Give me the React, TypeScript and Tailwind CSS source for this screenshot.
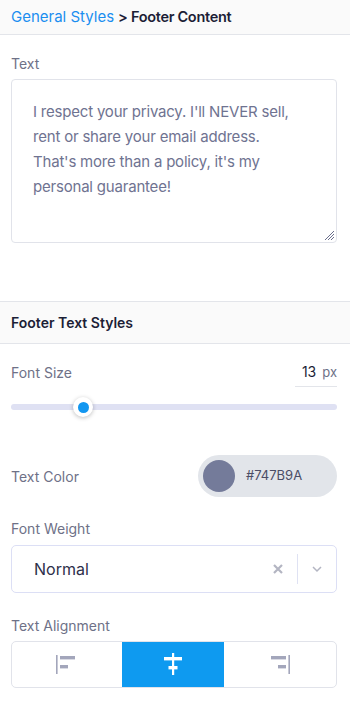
import React from "react";

function AlignLeft() {
  return (
    <svg width="24" height="24" viewBox="0 0 24 24">
      <rect x="1" y="2" width="1.6" height="19" fill="#a3a6bb" />
      <rect x="5" y="3" width="15" height="3.4" fill="#a3a6bb" />
      <rect x="5" y="12" width="8" height="3.4" fill="#a3a6bb" />
    </svg>
  );
}
function AlignCenter() {
  return (
    <svg width="24" height="24" viewBox="0 0 24 24">
      <rect x="11" y="0" width="2.2" height="22" fill="#fff" />
      <rect x="3" y="4" width="18" height="3.4" fill="#fff" />
      <rect x="7.5" y="13" width="9" height="3.4" fill="#fff" />
    </svg>
  );
}
function AlignRight() {
  return (
    <svg width="24" height="24" viewBox="0 0 24 24">
      <rect x="20.4" y="2" width="1.6" height="19" fill="#a3a6bb" />
      <rect x="3" y="3" width="15" height="3.4" fill="#a3a6bb" />
      <rect x="10" y="12" width="8" height="3.4" fill="#a3a6bb" />
    </svg>
  );
}

export default function App() {
  return (
    <div
      className="w-[350px] h-[702px] bg-white overflow-hidden"
      style={{ fontFamily: "Inter, 'Noto Sans', sans-serif" }}
    >
      <div className="h-[35px] bg-[#fafafa] border-b border-[#e3e5ea] flex items-center px-[11px]">
        <span className="text-[#1a8ef0] text-[15px]">General Styles</span>
        <span className="text-[#1c1e36] text-[14.5px] font-semibold tracking-[-0.3px] ml-[4px]">&gt; Footer Content</span>
      </div>

      <div className="pl-[11px] pr-[13px]">
        <div className="mt-[20px] text-[14px] text-[#6e7187] leading-[18px]">Text</div>
        <div className="relative mt-[6px] h-[164px] border border-[#e1e3ea] rounded-[4px] px-[21px] pt-[19px] text-[15px] leading-[25px] text-[#6f7391] tracking-[-0.2px] whitespace-nowrap">
          I respect your privacy. I'll NEVER sell,
          <br />
          rent or share your email address.
          <br />
          That's more than a policy, it's my
          <br />
          personal guarantee!
          <svg className="absolute right-[1px] bottom-[1px]" width="12" height="12" viewBox="0 0 12 12">
            <path d="M11 2 L2 11 M11 5 L5 11 M11 8 L8 11" stroke="#6b6f8c" strokeWidth="1" />
          </svg>
        </div>
      </div>

      <div className="mt-[58px] h-[43px] bg-[#fafafa] border-t border-b border-[#e3e5ea] flex items-center px-[11px] text-[14px] font-semibold text-[#1c1e36]">
        Footer Text Styles
      </div>

      <div className="pl-[11px] pr-[13px]">
        <div className="mt-[19px] flex items-center justify-between h-[18px]">
          <span className="text-[14px] text-[#6e7187]">Font Size</span>
          <div className="w-[42px] border-b border-[#e3e5ea] flex justify-end items-baseline gap-[6px] pb-[3px] mt-[4px]">
            <span className="text-[14px] text-[#1c1e36]">13</span>
            <span className="text-[13px] text-[#6e7187]">px</span>
          </div>
        </div>

        <div className="relative mt-[23px] h-[6px] rounded-full bg-[#dfe1f3]">
          <div className="absolute left-[62px] top-[-7px] w-[20px] h-[20px] rounded-full bg-white shadow-[0_1px_4px_rgba(0,0,0,0.25)] flex items-center justify-center">
            <div className="w-[11px] h-[11px] rounded-full bg-[#1296f0]" />
          </div>
        </div>

        <div className="mt-[45px] flex items-center justify-between">
          <span className="text-[14px] text-[#6e7187]">Text Color</span>
          <div className="w-[139px] h-[42px] rounded-full bg-[#e2e5ea] flex items-center pl-[5px] gap-[11px]">
            <div className="w-[32px] h-[32px] rounded-full bg-[#747B9A]" />
            <span className="text-[13px] text-[#4a4d66]">#747B9A</span>
          </div>
        </div>

        <div className="mt-[23px] text-[14px] text-[#6e7187] leading-[18px]">Font Weight</div>
        <div className="mt-[7px] h-[48px] border border-[#dcdff5] rounded-[5px] flex items-center pl-[22px]">
          <span className="flex-1 text-[16px] text-[#2d2f4a]">Normal</span>
          <div className="w-[20px] flex justify-center">
            <svg width="12" height="12" viewBox="0 0 12 12">
              <path d="M2 2 L10 10 M10 2 L2 10" stroke="#b3b5c2" strokeWidth="2.2" />
            </svg>
          </div>
          <div className="ml-[9px] w-px h-[30px] bg-[#dfe2f3]" />
          <div className="w-[38px] flex justify-center">
            <svg width="14" height="14" viewBox="0 0 14 14">
              <path d="M3 5 L7 9 L11 5" fill="none" stroke="#b3b5c2" strokeWidth="1.5" />
            </svg>
          </div>
        </div>

        <div className="mt-[24px] text-[14px] text-[#6e7187] leading-[18px]">Text Alignment</div>
        <div className="mt-[6px] h-[47px] border border-[#e1e3ea] rounded-[5px] flex overflow-hidden">
          <div className="w-[110px] flex items-center justify-center">
            <AlignLeft />
          </div>
          <div className="w-[102px] bg-[#0e9af0] flex items-center justify-center">
            <AlignCenter />
          </div>
          <div className="flex-1 flex items-center justify-center">
            <AlignRight />
          </div>
        </div>
      </div>
    </div>
  );
}
